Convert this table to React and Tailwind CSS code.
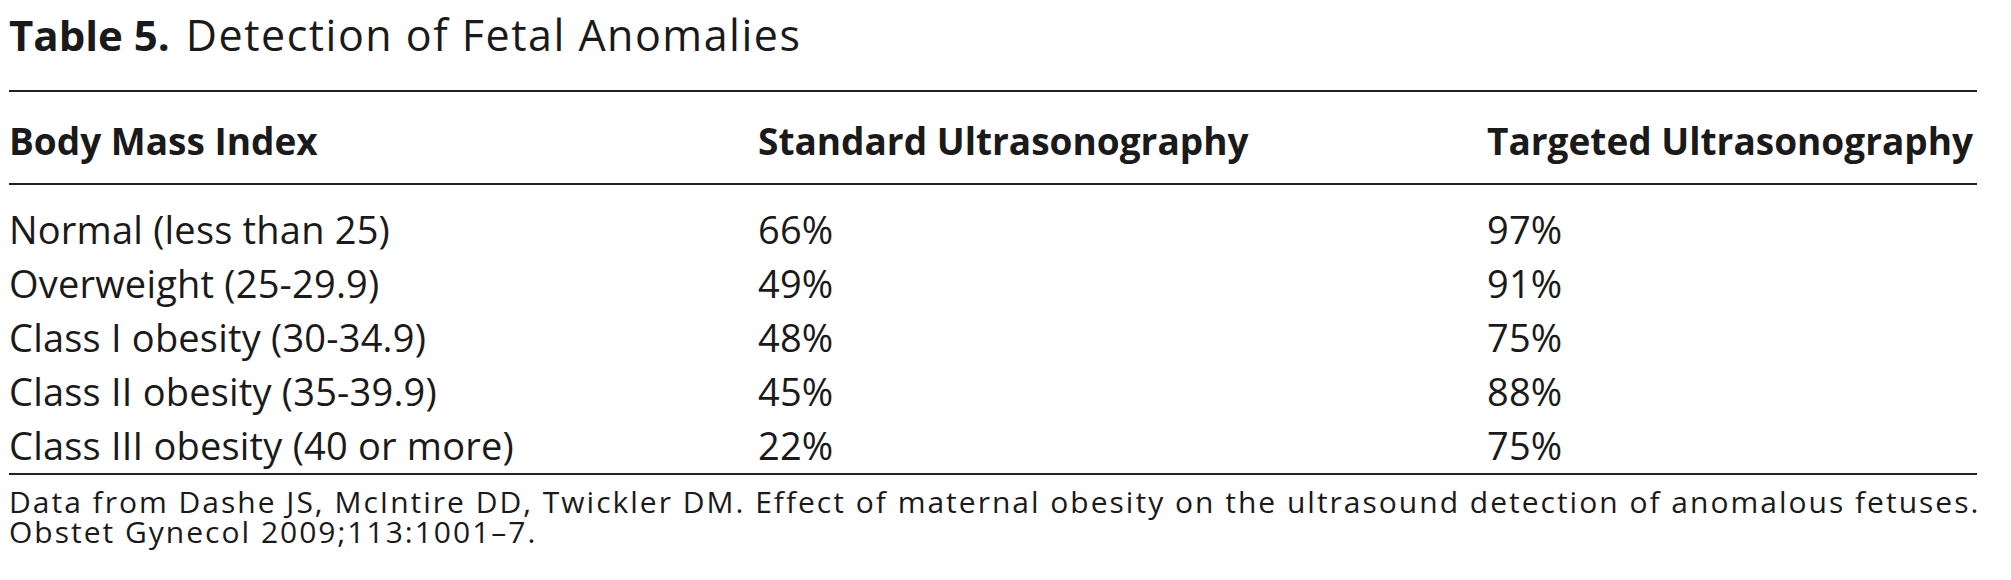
const rows = [
  ['Normal (less than 25)', '66%', '97%'],
  ['Overweight (25-29.9)', '49%', '91%'],
  ['Class I obesity (30-34.9)', '48%', '75%'],
  ['Class II obesity (35-39.9)', '45%', '88%'],
  ['Class III obesity (40 or more)', '22%', '75%'],
]

export default function App() {
  return (
    <div className="w-[2011px] h-[580px] bg-white text-[#1a1a1a] font-['Open_Sans',sans-serif] pl-[9px]">
      <div className="w-[1968px]">
        <div className="h-[90px] pt-[13px] leading-none whitespace-nowrap">
          <span className="text-[42px] font-bold">Table 5.</span>
          <span className="ml-[16px] text-[43px] tracking-[1.5px]">Detection of Fetal Anomalies</span>
        </div>

        <div className="border-t-2 border-b-2 border-[#222] h-[95px] pt-[30px] grid grid-cols-[749px_729px_1fr] text-[37px] leading-none font-bold whitespace-nowrap">
          <div>Body Mass Index</div>
          <div>Standard Ultrasonography</div>
          <div>Targeted Ultrasonography</div>
        </div>

        <div className="pt-[17px] pb-[1px] border-b-2 border-[#222] text-[38px] leading-[54px] tracking-[0.2px]">
          {rows.map(r => (
            <div key={r[0]} className="grid grid-cols-[749px_729px_1fr] h-[54px]">
              <div>{r[0]}</div>
              <div>{r[1]}</div>
              <div>{r[2]}</div>
            </div>
          ))}
        </div>

        <p className="pt-[12px] text-[30px] leading-[30px] tracking-[2px] whitespace-nowrap">
          Data from Dashe JS, McIntire DD, Twickler DM. Effect of maternal obesity on the ultrasound detection of anomalous fetuses.
          <br />
          Obstet Gynecol 2009;113:1001–7.
        </p>
      </div>
    </div>
  )
}
